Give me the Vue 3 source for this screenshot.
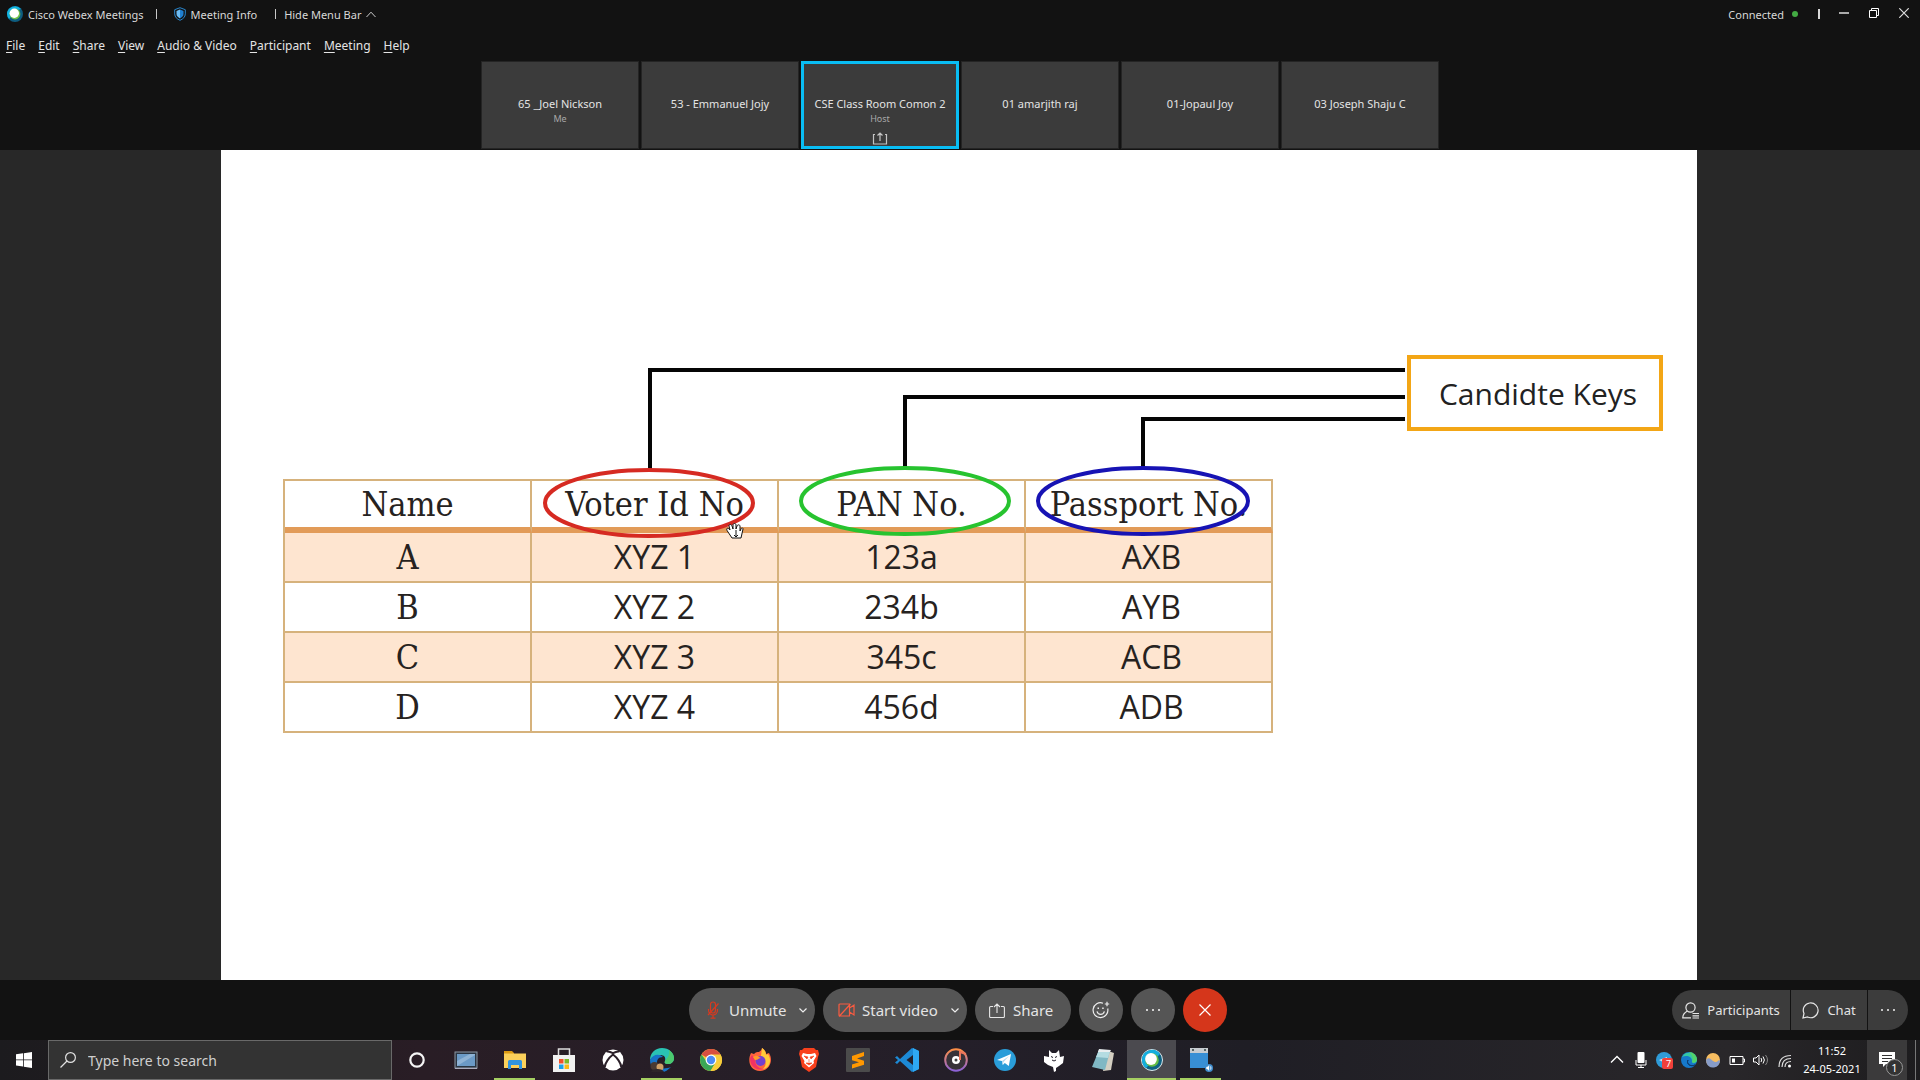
<script setup>
const menus = ['File', 'Edit', 'Share', 'View', 'Audio & Video', 'Participant', 'Meeting', 'Help']

const people = [
  { name: '65 _Joel Nickson', role: 'Me' },
  { name: '53 - Emmanuel Jojy' },
  { name: 'CSE Class Room Comon 2', role: 'Host', active: true },
  { name: '01 amarjith raj' },
  { name: '01-Jopaul Joy' },
  { name: '03 Joseph Shaju C' },
]

const headings = ['Name', 'Voter Id No', 'PAN No.', 'Passport No.']
const rows = [
  ['A', 'XYZ 1', '123a', 'AXB'],
  ['B', 'XYZ 2', '234b', 'AYB'],
  ['C', 'XYZ 3', '345c', 'ACB'],
  ['D', 'XYZ 4', '456d', 'ADB'],
]
</script>

<template>
  <div class="app">
    <header class="top">
      <div class="titlebar">
        <svg class="logo" width="16" height="16" viewBox="0 0 16 16">
          <circle cx="8" cy="8" r="8" fill="#0e5d80" />
          <path d="M0 8a8 8 0 0 1 14-5l-3 1-8 8-1 1A8 8 0 0 1 0 8z" fill="#12b3e0" />
          <circle cx="8" cy="8" r="5.4" fill="#6fc04b" />
          <circle cx="7.3" cy="7.3" r="4.7" fill="#fff" />
        </svg>
        <span>Cisco Webex Meetings</span>
        <i class="divider after-name"></i>
        <button class="plain info">
          <svg width="12" height="14" viewBox="0 0 12 14">
            <path d="M6 .7l5.3 2v4.2c0 3-2.2 5.2-5.3 6.4C2.900 12.100.7 9.900.7 6.900V2.700z" fill="none" stroke="#2a86cc" />
            <path d="M6 2.600l3.500 1.300v3.200c0 2-1.500 3.500-3.500 4.400z" fill="#1f7fd0" />
            <path d="M6 2.600L2.500 3.900v3.200c0 2 1.500 3.500 3.500 4.400z" fill="#6bbcf5" />
          </svg>
          Meeting Info
        </button>
        <i class="divider after-info"></i>
        <button class="plain hide">
          Hide Menu Bar
          <svg width="10" height="7" viewBox="0 0 10 7"><path d="M.5 6L5 1.200 9.500 6" fill="none" stroke="#ccc" /></svg>
        </button>
        <span class="connected">Connected</span>
        <i class="dot"></i>
        <i class="bar"></i>
        <button class="plain win" aria-label="Minimize">
          <svg width="10" height="10" viewBox="0 0 10 10"><path d="M0 5h10" stroke="#aaa" stroke-width="2" /></svg>
        </button>
        <button class="plain win" aria-label="Restore">
          <svg width="10" height="10" viewBox="0 0 10 10"><path d="M.5 2.500h7v7h-7zM2.500 2.500v-2h7v7h-2" fill="none" stroke="#fff" /></svg>
        </button>
        <button class="plain win" aria-label="Close">
          <svg width="10" height="10" viewBox="0 0 10 10"><path d="M.3.3l9.400 9.400M9.700.3L.3 9.700" stroke="#ddd" stroke-width="1.200" /></svg>
        </button>
      </div>
      <nav class="menubar">
        <button v-for="m in menus" :key="m" class="plain"><u>{{ m[0] }}</u>{{ m.slice(1) }}</button>
      </nav>
      <div class="tiles">
        <div v-for="p in people" :key="p.name" class="tile" :class="{ active: p.active }">
          <span class="name">{{ p.name }}</span>
          <span class="role">{{ p.role }}</span>
          <svg v-if="p.active" class="sharing" width="16" height="13" viewBox="0 0 16 13">
            <path d="M3 2.500H1.500v9.500h13V2.500H13M8 9V1.200M5.500 3.500L8 1l2.500 2.500" fill="none" stroke="#c4c4c4" stroke-width="1.200" />
          </svg>
        </div>
      </div>
    </header>

    <main class="stage">
      <section class="slide">
        <div class="keys">Candidte Keys</div>
        <table class="records">
          <thead>
            <tr><th v-for="h in headings" :key="h">{{ h }}</th></tr>
          </thead>
          <tbody>
            <tr v-for="r in rows" :key="r[0]"><td v-for="c in r" :key="c">{{ c }}</td></tr>
          </tbody>
        </table>
        <svg class="marks" aria-hidden="true">
          <g fill="none" stroke="#050505" stroke-width="4">
            <path d="M429 319V220H1184" />
            <path d="M684 317V247H1184" />
            <path d="M922 317V269H1184" />
          </g>
          <g fill="none" stroke-width="4">
            <ellipse cx="428" cy="353" rx="104" ry="33" stroke="#d62a22" />
            <ellipse cx="684" cy="351" rx="104" ry="33" stroke="#27c32f" />
            <ellipse cx="922" cy="351" rx="105" ry="33" stroke="#1713b4" />
          </g>
          <path d="M511 388l-4-6c-3-4 0-5 2-2l-1-4c0-2 2-2 3 0l1 3v-4c0-2 3-2 3 0v4l1-3c1-2 3-1 3 0v5l1-2c1-2 2-1 2 0l-2 9z" fill="#fff" stroke="#111" />
          <path d="M515 380v7m-2-2l2 2 2-2" fill="none" stroke="#111" />
        </svg>
      </section>
    </main>

    <footer class="controls">
      <div class="center">
        <button class="pill unmute">
          <svg width="14" height="18" viewBox="0 0 14 18" fill="none" stroke="#d8391f" stroke-width="1.200">
            <rect x="4.500" y="1" width="5" height="11" rx="2.500" /><path d="M2.500 8v1c0 3 2 5 4.500 5s4.500-2 4.500-5V8M7 14v3M4.500 17.200h5M2 14L12.500 2.500" />
          </svg>
          <span>Unmute</span>
          <svg class="chev" width="8" height="5" viewBox="0 0 8 5"><path d="M.5.500L4 4 7.500.500" fill="none" stroke="#eee" stroke-width="1.200" /></svg>
        </button>
        <button class="pill video">
          <svg width="17" height="14" viewBox="0 0 17 14" fill="none" stroke="#fa5b40" stroke-width="1.200">
            <path d="M2 1h9.500v12H2a1 1 0 0 1-1-1V2a1 1 0 0 1 1-1zM11.500 5l4.500-3v10l-4.500-3M1 13.500L12.500 1" />
          </svg>
          <span>Start video</span>
          <svg class="chev" width="8" height="5" viewBox="0 0 8 5"><path d="M.5.500L4 4 7.500.500" fill="none" stroke="#eee" stroke-width="1.200" /></svg>
        </button>
        <button class="pill share">
          <svg width="16" height="15" viewBox="0 0 16 15" fill="none" stroke="#e6e6e6" stroke-width="1.100">
            <path d="M4 3.500H1.600a1 1 0 0 0-1 1v9a1 1 0 0 0 1 1h12.800a1 1 0 0 0 1-1v-9a1 1 0 0 0-1-1H12M8 10V1M5 4l3-3 3 3" />
          </svg>
          <span>Share</span>
        </button>
        <button class="round" aria-label="Reactions">
          <svg width="18" height="18" viewBox="0 0 18 18" fill="none" stroke="#eee" stroke-width="1.200">
            <path d="M11 2.200A7.400 7.400 0 1 0 15.700 7.500M5 10.300c.5 1.900 2 3 3.700 3s3.200-1.100 3.700-3M15 .8v4.400M12.800 3h4.400" /><path d="M5.500 7.200h1.500M10.200 7.200h1.500" stroke-width="1.600" />
          </svg>
        </button>
        <button class="round" aria-label="More options">
          <svg width="16" height="2" viewBox="0 0 16 2"><path d="M1 0h2v2H1zM7 0h2v2H7zM13 0h2v2h-2z" fill="#d0d0d0" /></svg>
        </button>
        <button class="round leave" aria-label="Leave meeting">
          <svg width="12" height="12" viewBox="0 0 12 12"><path d="M.5.500l11 11M11.500.500l-11 11" stroke="#fff" stroke-width="1.200" /></svg>
        </button>
      </div>
      <div class="side">
        <button class="people">
          <svg width="17" height="17" viewBox="0 0 17 17" fill="none" stroke="#e6e6e6" stroke-width="1.200">
            <circle cx="8.500" cy="5.500" r="4.600" /><path d="M5.500 9C2.500 10.500.8 12.500.8 15.800H9M10.500 11.500H17M10.500 13.800H17M10.500 16H17" />
          </svg>
          Participants
        </button>
        <button class="chat">
          <svg width="17" height="17" viewBox="0 0 17 17" fill="none" stroke="#e6e6e6" stroke-width="1.200">
            <path d="M1 16l1-4.500A7.400 7.400 0 1 1 5.500 15z" />
          </svg>
          Chat
        </button>
        <button class="more" aria-label="More panels">
          <svg width="16" height="2" viewBox="0 0 16 2"><path d="M1 0h2v2H1zM7 0h2v2H7zM13 0h2v2h-2z" fill="#c4c4c4" /></svg>
        </button>
      </div>
    </footer>

    <div class="taskbar">
      <button class="start" aria-label="Start">
        <svg width="16" height="16" viewBox="0 0 16 16"><path d="M0 2.300L7 1.300V7.500H0zM7.800 1.200L16 0v7.500H7.800zM0 8.300h7v6.300l-7-1zM7.800 8.300H16V16l-8.200-1.200z" fill="#fff" /></svg>
      </button>
      <div class="search">
        <svg width="16" height="16" viewBox="0 0 16 16" fill="none" stroke="#e0e0e0" stroke-width="1.200"><circle cx="10.500" cy="5.500" r="4.900" /><path d="M7 9L.5 15.500" /></svg>
        <input type="text" placeholder="Type here to search" aria-label="Type here to search" />
      </div>
      <div class="apps">
        <button aria-label="Cortana"><svg width="24" height="24" viewBox="0 0 24 24"><circle cx="12" cy="12" r="6.700" fill="none" stroke="#f5f5f5" stroke-width="2.200" /></svg></button>
        <button aria-label="This PC">
          <svg width="24" height="24" viewBox="0 0 24 24"><rect x="1" y="4" width="22" height="16" fill="#2a3542" stroke="#8c98a4" /><rect x="3" y="6" width="18" height="12" fill="#6b9ac6" /><path d="M3 18V13L16 6h5v1z" fill="#9ebedb" opacity=".7" /><path d="M1 20.500h22" stroke="#aab" /></svg>
        </button>
        <button class="open" aria-label="File Explorer">
          <svg width="24" height="24" viewBox="0 0 24 24"><path d="M1 3h8l2 2v4H1z" fill="#dc9a12" /><path d="M1 5.500h22V20H1z" fill="#fbd05a" /><path d="M5 21v-7.500a1.500 1.500 0 0 1 1.500-1.500h11a1.500 1.500 0 0 1 1.500 1.500V21h-3v-4H8v4z" fill="#2f94e0" /></svg>
        </button>
        <button aria-label="Microsoft Store">
          <svg width="24" height="24" viewBox="0 0 24 24"><path d="M6.500 7V1h11v6" fill="none" stroke="#ddd" stroke-width="1.500" /><path d="M1 7h22v17H1z" fill="#f1f1f1" /><path d="M7 11h4.500v4.500H7z" fill="#f2502b" /><path d="M12.500 11H17v4.500h-4.500z" fill="#7db928" /><path d="M7 16.500h4.500V21H7z" fill="#1ba1e9" /><path d="M12.500 16.500H17V21h-4.500z" fill="#fbb917" /></svg>
        </button>
        <button aria-label="Xbox">
          <svg width="24" height="24" viewBox="0 0 24 24"><circle cx="12" cy="12" r="10.500" fill="#fff" /><path d="M5.500 3.500C8 3 10 4 12 5.200 14 4 16 3 18.500 3.500M12 6.500C8 9.500 4 15 3.800 19M12 6.500c4 3 8 8.500 8.200 12.500" fill="none" stroke="#2a1f28" stroke-width="2" /></svg>
        </button>
        <button class="open" aria-label="Edge">
          <svg width="24" height="24" viewBox="0 0 24 24"><path d="M0 12C0 5 5 0 12 0s12 5 12 10c0 4-3 6-6 6-3 0-4-1-3-3 1-4-1-6-5-6-5 0-8 3-10 5z" fill="#2ac3b3" /><path d="M0 12c2-5 9-7 13-3-5 0-6 3-6 6 1 5 6 7 14 4-3 3-6 5-9 5C5 24 0 19 0 12z" fill="#1774c8" /><path d="M19 2c3 2 5 5 5 8 0 4-3 6-6 6-3 0-4-1-3-3 2-3 5-5 4-11z" fill="#4cc96e" /><circle cx="4.500" cy="18" r="4" fill="#4a3a32" /><circle cx="10" cy="19" r="3.500" fill="#d0a067" /><path d="M1 24c1-4 12-4 13 0z" fill="#2d2529" /></svg>
        </button>
        <button aria-label="Chrome">
          <svg width="24" height="24" viewBox="0 0 24 24"><circle cx="12" cy="12" r="11" fill="#f7cd3b" /><path d="M12 12L2.500 6.500A11 11 0 0 1 21.500 6.500z" fill="#d94f40" /><path d="M2.500 6.500A11 11 0 0 0 11.500 23L17 14H8z" fill="#3aa757" /><path d="M12 6.500h9.500a11 11 0 0 1-10 16.500L17 14z" fill="#f7cd3b" /><circle cx="12" cy="12" r="5.400" fill="#fff" /><circle cx="12" cy="12" r="4.200" fill="#4c8bf5" /></svg>
        </button>
        <button aria-label="Firefox">
          <svg width="24" height="24" viewBox="0 0 24 24"><path d="M3 5l3 1c2-2 3-2 5-2 1-1 3-2 3-4 3 2 4 4 4 6l3-1c5 8 0 18-9 18C2 23-1 13 3 5z" fill="#ff643d" /><path d="M14 0c3 2 4 4 4 7l2-1c5 8 0 15-5 15 5-5 2-10-2-13z" fill="#ffca39" /><path d="M2 10c0 9 7 13 13 11-5-1-8-4-8-9l-3-5z" fill="#f13264" /><circle cx="12.500" cy="13" r="5" fill="#7340cf" /><path d="M5 9c4-3 6 0 8 1-4 1-3 2-6 2z" fill="#ff9a28" /></svg>
        </button>
        <button aria-label="Brave">
          <svg width="24" height="24" viewBox="0 0 24 24"><path d="M7 0h10l2 2h2l1 4-1 3-2 10-7 5-7-5L3 9 2 6l1-4h2z" fill="#f9401c" /><path d="M6 5l4 1h4l4-1 1.500 3-3 5 .5 2-5 4.500L7 15l.5-2-3-5z" fill="#fff" /><path d="M7 8l4 1-1 2zM17 8l-4 1 1 2zM12 11v3M9 15h6l-3 2z" fill="#f9401c" stroke="#f9401c" stroke-width=".6" /></svg>
        </button>
        <button aria-label="Sublime Text">
          <svg width="24" height="24" viewBox="0 0 24 24"><rect width="24" height="24" rx="1" fill="#4b4b4b" /><path d="M6 8l12-4v4l-7 2.500 7 2.300v4L6 20.500v-4l7-2.300-7-2z" fill="#ff9800" /></svg>
        </button>
        <button aria-label="Visual Studio Code">
          <svg width="24" height="24" viewBox="0 0 24 24"><path d="M17 0l7 3v18l-7 3L5 13l-3 3-2-1.500L3 12 0 9.500 2 8l3 3zM18 7l-6.500 5 6.500 5z" fill="#1d8ad6" fill-rule="evenodd" /><path d="M18 0l6 3v18l-6 3z" fill="#2ea8f4" /></svg>
        </button>
        <button aria-label="Music">
          <svg width="24" height="24" viewBox="0 0 24 24"><defs><linearGradient id="disc" x1="0" y1="0" x2="0" y2="1"><stop offset="0" stop-color="#ff8f45" /><stop offset="1" stop-color="#8c62d8" /></linearGradient></defs><circle cx="12" cy="12" r="10.800" fill="#383339" stroke="url(#disc)" stroke-width="2" /><circle cx="12" cy="12" r="4" fill="#fff" /><circle cx="12" cy="12" r="1.500" fill="#444" /><path d="M16 12V4l6 2" stroke="#ed765b" stroke-width="2" fill="none" /></svg>
        </button>
        <button aria-label="Telegram">
          <svg width="24" height="24" viewBox="0 0 24 24"><circle cx="12" cy="12" r="11" fill="#2a9dd9" /><path d="M4 12L18 6l-2.200 12-4-3-2 2-.8-4z" fill="#fff" /><path d="M9 13l7-5-5.500 6-.7 3z" fill="#b4d8ec" /></svg>
        </button>
        <button aria-label="GitHub client">
          <svg width="24" height="24" viewBox="0 0 24 24"><path d="M7 2l3 3h4l3-3 1 7 4-1-1 7-4 3-3 2v3l-2 1-1-5-5-2-4-3V8l5 1z" fill="#fff" /><path d="M9 8.500l2 1M15 8.500l-2 1M10 12l2 1 2-1" stroke="#241f2b" fill="none" /></svg>
        </button>
        <button aria-label="Notepad">
          <svg width="24" height="24" viewBox="0 0 24 24"><path d="M17 3l6 2-3 17-8 1z" fill="#d4cfc2" /><path d="M8 2l11 1-5 19-13-3z" fill="#80b8c4" /><path d="M8 2l11 1-2 7L5 9z" fill="#b4dce2" /><path d="M7 4l1-3 12 1-1 2z" fill="#e9eef0" /></svg>
        </button>
        <button class="open current" aria-label="Webex">
          <svg width="24" height="24" viewBox="0 0 24 24"><circle cx="12" cy="12" r="10.500" fill="#0e6384" stroke="#dce8ec" /><path d="M2 12A10 10 0 0 1 20 6L6 20a10 10 0 0 1-4-8z" fill="#14aede" /><circle cx="12" cy="12" r="6.800" fill="#67be45" /><circle cx="11" cy="11" r="5.900" fill="#fff" /></svg>
        </button>
        <button class="open" aria-label="Screen recorder">
          <svg width="24" height="24" viewBox="0 0 24 24"><path d="M1 0h18v5H1z" fill="#c7ccd1" /><path d="M1 5h18v15H1z" fill="#388fd5" /><path d="M3 2h2M15 2h2" stroke="#566" stroke-width="2" /><circle cx="20" cy="20" r="4" fill="#3e8ccc" /><path d="M17.500 19h1l1.500-1.500v5L18.500 21h-1zM21.500 18q1.500 2 0 4" fill="#fff" stroke="#fff" stroke-width=".4" /></svg>
        </button>
      </div>
      <div class="tray">
        <button aria-label="Show hidden icons"><svg width="18" height="18" viewBox="0 0 18 18"><path d="M3 11.500l6-6 6 6" fill="none" stroke="#fff" stroke-width="1.400" /></svg></button>
        <button aria-label="Microphone"><svg width="18" height="18" viewBox="0 0 18 18"><rect x="5.500" y="1" width="7" height="11" rx="1" fill="#fff" /><path d="M4 9v5h10V9M9 14v3M6 16.500h6" fill="none" stroke="#fff" /></svg></button>
        <button aria-label="Telegram, 7 messages"><svg width="18" height="18" viewBox="0 0 18 18"><circle cx="8" cy="9" r="8" fill="#2f9bd8" /><path d="M3 9l8-3v6l-4-1z" fill="#cfe6f3" /><rect x="6" y="7" width="11" height="11" rx="2" fill="#f2403a" /><text x="10" y="16" font-size="9" fill="#fff">7</text></svg></button>
        <button aria-label="Edge"><svg width="18" height="18" viewBox="0 0 18 18"><circle cx="9" cy="9" r="8" fill="#1679cb" /><path d="M2 6a8 8 0 0 1 15 3c0 4-6 4-5 1 0-5-6-6-10-4z" fill="#35c7a2" /><path d="M9 1a8 8 0 0 1 8 8c-1 3-4 3-5 2C14 7 12 4 9 1z" fill="#53d46a" /><path d="M8 9c-2 4 2 7 7 5-4 2-9-1-7-5z" fill="#0c3c70" stroke="#0c3c70" /></svg></button>
        <button aria-label="Weather"><svg width="18" height="18" viewBox="0 0 18 18"><circle cx="9" cy="9" r="7" fill="#f7bd60" /><path d="M2 9c3-4 5 0 7 1s3 2 6-1l1 1a7 7 0 0 1-13.500 2z" fill="#879cc8" /></svg></button>
        <button aria-label="Battery"><svg width="18" height="18" viewBox="0 0 18 18"><path d="M2 5.500h13v8H2zM15 8h1.500v3H15" fill="none" stroke="#fff" /><path d="M4 7.500h3v4H4z" fill="#fff" /></svg></button>
        <button aria-label="Volume"><svg width="18" height="18" viewBox="0 0 18 18" fill="none" stroke="#fff"><path d="M1.500 7H4l3-3v10l-3-3H1.500zM9 7q1.500 2 0 4M11 5.500q2.800 3.500 0 7" /><path d="M13.500 4q4 5 0 10" stroke="#888" /></svg></button>
        <button aria-label="Wi-Fi"><svg width="18" height="18" viewBox="0 0 18 18" fill="none" stroke="#ddd" stroke-width="1.200"><path d="M3 16Q3 4.500 15 4.500M6 16q0-8.500 9-8.500M9 16q0-5.500 6-5.500" /><circle cx="13.500" cy="15" r="1.500" fill="#fff" stroke="none" /></svg></button>
        <div class="clock"><span>11:52</span><span>24-05-2021</span></div>
        <button class="notes" aria-label="1 new notification">
          <svg width="18" height="18" viewBox="0 0 18 18"><path d="M1 1h16v12H8l-3 3v-3H1z" fill="#fff" /><path d="M4 4.500h10M4 7.500h10M4 10.500h6" stroke="#333" stroke-width="1.200" /></svg>
          <span class="badge">1</span>
        </button>
        <i class="peek"></i>
      </div>
    </div>
  </div>
</template>

<style>
body {
  background: #121212;
}
</style>

<style scoped>
.app {
  display: flex;
  flex-direction: column;
  min-height: 100vh;
  font-family: "Noto Sans", "Open Sans", sans-serif;
  font-size: 12px;
  color: #e4e4e4;
  background: #121212;
}
button {
  margin: 0;
  padding: 0;
  border: 0;
  background: none;
  color: inherit;
  font: inherit;
}
svg {
  display: block;
  flex: none;
}

.titlebar {
  display: flex;
  align-items: center;
  box-sizing: border-box;
  height: 30px;
  padding: 0 11px 2px 7px;
  font-size: 11px;
  color: #d8d8d8;
}
.logo {
  margin-right: 5px;
}
.divider {
  width: 1px;
  height: 10px;
  background: #c8c8c8;
}
.after-name {
  margin: 0 17px 0 12px;
}
.after-info {
  margin: 0 8px 0 18px;
}
.info,
.hide {
  display: flex;
  align-items: center;
  gap: 5px;
}
.connected {
  margin-left: auto;
}
.dot {
  width: 6px;
  height: 6px;
  margin: 0 20px 0 8px;
  border-radius: 50%;
  background: #43ab43;
}
.bar {
  width: 2px;
  height: 10px;
  margin-right: -1px;
  background: #d8d8d8;
}
.win {
  margin-left: 20px;
  padding-bottom: 2px;
}

.menubar {
  display: flex;
  align-items: center;
  gap: 13px;
  height: 31px;
  padding-left: 6px;
}
.menubar u {
  text-underline-offset: 2px;
}

.tiles {
  display: flex;
  justify-content: center;
  gap: 2px;
  padding-bottom: 1px;
}
.tile {
  display: flex;
  flex-direction: column;
  align-items: center;
  box-sizing: border-box;
  width: 158px;
  height: 88px;
  padding-top: 34px;
  border: 1px solid #242424;
  background: #3b3b3b;
}
.tile.active {
  padding-top: 32px;
  border: 3px solid #09bdf4;
}
.name {
  font-size: 11px;
  line-height: 16px;
}
.role {
  height: 14px;
  font-size: 9px;
  line-height: 14px;
  color: #a8a8a8;
}
.sharing {
  margin-top: 6px;
}

.stage {
  display: flex;
  flex: 1;
  padding: 0 223px 0 221px;
  background: #282828;
}
.slide {
  position: relative;
  flex: 1;
  min-height: 600px;
  padding: 205px 34px 0 62px;
  background: #fff;
}
.keys {
  box-sizing: border-box;
  width: 256px;
  height: 76px;
  margin-left: auto;
  padding: 1px 0 0 6px;
  border: 4px solid #f3a616;
  font: 30px/68px "Open Sans", sans-serif;
  text-align: center;
  color: #222;
}
.records {
  margin-top: 48px;
  border: 2px solid #d6b27c;
  border-width: 2px 0 0 2px;
  border-spacing: 0;
  color: #262220;
}
.records th,
.records td {
  box-sizing: border-box;
  width: 247px;
  height: 50px;
  padding: 0;
  border: 2px solid #d6b27c;
  border-width: 0 2px 2px 0;
  font: 32px/40px "Open Sans", sans-serif;
  text-align: center;
}
.records th {
  height: 52px;
  border-bottom: 6px solid #e29b58;
}
.records td:last-child {
  padding-left: 6px;
}
.records th,
.records td:first-child {
  font: 34px/42px "DejaVu Serif Condensed", "Liberation Serif", serif;
}
.records tbody tr:nth-child(odd) {
  background: #fee5d0;
}
.marks {
  position: absolute;
  inset: 0;
  width: 100%;
  height: 100%;
}

.controls {
  display: grid;
  grid-template-columns: 1fr auto 1fr;
  align-items: center;
  height: 60px;
  padding: 0 12px 0 8px;
}
.center {
  display: flex;
  grid-column: 2;
  gap: 8px;
}
.pill,
.round {
  display: flex;
  align-items: center;
  height: 44px;
  border-radius: 22px;
  background: #555;
  font-size: 15px;
}
.pill {
  padding: 0 8px 0 17px;
}
.unmute {
  width: 126px;
  gap: 9px;
}
.video {
  width: 144px;
  gap: 7px;
  padding-left: 15px;
}
.share {
  width: 96px;
  gap: 8px;
  padding-left: 14px;
}
.chev {
  margin-left: auto;
}
.round {
  justify-content: center;
  width: 44px;
}
.leave {
  background: #d5361b;
}
.side {
  display: flex;
  gap: 1px;
  justify-self: end;
}
.side button {
  display: flex;
  align-items: center;
  justify-content: center;
  gap: 8px;
  height: 40px;
  background: #3c3c3c;
  font-size: 13px;
}
.side .people {
  width: 118px;
  border-radius: 20px 0 0 20px;
}
.side .chat {
  width: 76px;
}
.side .more {
  width: 40px;
  border-radius: 0 20px 20px 0;
}

.taskbar {
  display: flex;
  height: 40px;
  background: linear-gradient(90deg, #1c1b1e, #291d25 22%, #241f29 50%, #1f1e25 65%, #29272a 90%, #1d1c1e);
}
.start {
  display: flex;
  align-items: center;
  justify-content: center;
  width: 48px;
}
.search {
  display: flex;
  align-items: center;
  gap: 12px;
  box-sizing: border-box;
  width: 344px;
  padding-left: 11px;
  border: 1px solid #696969;
  background: #333;
}
.search input {
  flex: 1;
  min-width: 0;
  padding: 0;
  border: 0;
  outline: 0;
  background: none;
  color: #d8d8d8;
  font: inherit;
  font-size: 14px;
}
.search input::placeholder {
  color: #cfcfcf;
}
.apps {
  display: flex;
}
.apps button {
  display: flex;
  align-items: center;
  justify-content: center;
  position: relative;
  width: 49px;
}
.open::after {
  content: "";
  position: absolute;
  left: 4px;
  right: 4px;
  bottom: 0;
  height: 2px;
  background: #a5cf62;
}
.apps .current {
  background: #4b4a4f;
}
.current::after {
  left: 0;
  right: 0;
}
.tray {
  display: flex;
  align-items: center;
  margin-left: auto;
}
.tray > button:not(.notes) {
  width: 18px;
  margin-right: 6px;
}
.clock {
  display: flex;
  flex-direction: column;
  align-items: center;
  width: 64px;
  margin-right: 3px;
  font-size: 11px;
  line-height: 18px;
  color: #fff;
}
.notes {
  display: flex;
  align-items: center;
  justify-content: center;
  position: relative;
  width: 40px;
  height: 40px;
  background: #3b3a3b;
}
.badge {
  position: absolute;
  right: 4px;
  bottom: 4px;
  box-sizing: border-box;
  width: 17px;
  height: 17px;
  border: 1px solid #999;
  border-radius: 50%;
  background: #333;
  font-size: 11px;
  line-height: 15px;
  color: #fff;
}
.peek {
  width: 1px;
  height: 40px;
  margin: 0 4px 0 8px;
  background: #777;
}
</style>
